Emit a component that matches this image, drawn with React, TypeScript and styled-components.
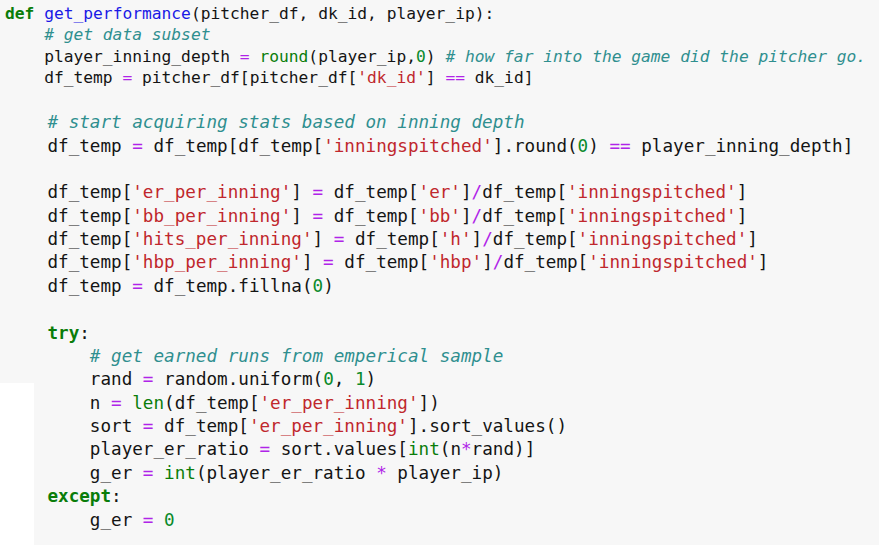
import React from "react";
import styled, { createGlobalStyle } from "styled-components";

const Global = createGlobalStyle`
  html, body { margin: 0; padding: 0; background: #f7f7f7; }
  #root { width: 879px; height: 545px; }
`;

const CodeCell = styled.div`
  width: 879px;
  height: 545px;
  box-sizing: border-box;
  padding: 2.6px 0 0 5px;
  overflow: hidden;
  display: flex;
  flex-direction: column;
  font-family: "DejaVu Sans Mono", "Liberation Mono", monospace;
  color: #141414;
  background:
    linear-gradient(#ffffff, #ffffff) 0 383px / 34px 162px no-repeat,
    #f7f7f7;
`;

const Section = styled.pre<{ $size: number; $lh: number; $gap?: number }>`
  margin: ${({ $gap }) => $gap ?? 0}px 0 0;
  font-family: inherit;
  font-size: ${({ $size }) => $size}px;
  line-height: ${({ $lh }) => $lh}px;
  white-space: pre;
`;

const Line = styled.div`
  min-height: 1lh;
`;

type Kind = "kw" | "fn" | "cm" | "op" | "str" | "num" | "bi" | "tx";

const Tok = styled.span<{ $k: Kind }>`
  color: ${({ $k }) =>
    ({
      kw: "#0a7d0a",
      fn: "#1a1ae6",
      cm: "#2f8f8f",
      op: "#b024e8",
      str: "#c0272d",
      num: "#0a8a2a",
      bi: "#0a7d0a",
      tx: "#141414",
    }[$k])};
  font-weight: ${({ $k }) => ($k === "kw" ? 700 : 400)};
  font-style: ${({ $k }) => ($k === "cm" ? "italic" : "normal")};
`;

const head = [
  "def get_performance(pitcher_df, dk_id, player_ip):",
  "    # get data subset",
  "    player_inning_depth = round(player_ip,0) # how far into the game did the pitcher go.",
  "    df_temp = pitcher_df[pitcher_df['dk_id'] == dk_id]",
  "",
];

const body = [
  "    # start acquiring stats based on inning depth",
  "    df_temp = df_temp[df_temp['inningspitched'].round(0) == player_inning_depth]",
  "",
  "    df_temp['er_per_inning'] = df_temp['er']/df_temp['inningspitched']",
  "    df_temp['bb_per_inning'] = df_temp['bb']/df_temp['inningspitched']",
  "    df_temp['hits_per_inning'] = df_temp['h']/df_temp['inningspitched']",
  "    df_temp['hbp_per_inning'] = df_temp['hbp']/df_temp['inningspitched']",
  "    df_temp = df_temp.fillna(0)",
  "",
  "    try:",
  "        # get earned runs from emperical sample",
  "        rand = random.uniform(0, 1)",
  "        n = len(df_temp['er_per_inning'])",
  "        sort = df_temp['er_per_inning'].sort_values()",
  "        player_er_ratio = sort.values[int(n*rand)]",
  "        g_er = int(player_er_ratio * player_ip)",
  "    except:",
  "        g_er = 0",
];

const KEYWORDS = new Set(["def", "try", "except"]);
const BUILTINS = new Set(["round", "len", "int"]);

function tokenize(line: string): { k: Kind; t: string }[] {
  const out: { k: Kind; t: string }[] = [];
  const re = /(#.*$)|('[^']*')|(\b\d+\b)|([A-Za-z_][A-Za-z0-9_]*)|(==|=|\/|\*)|(\s+)|(.)/g;
  let m: RegExpExecArray | null;
  let prevWord = "";
  while ((m = re.exec(line)) !== null) {
    if (m[1]) out.push({ k: "cm", t: m[1] });
    else if (m[2]) out.push({ k: "str", t: m[2] });
    else if (m[3]) out.push({ k: "num", t: m[3] });
    else if (m[4]) {
      const w = m[4];
      const isAttr = m.index > 0 && line[m.index - 1] === ".";
      if (KEYWORDS.has(w)) out.push({ k: "kw", t: w });
      else if (prevWord === "def") out.push({ k: "fn", t: w });
      else if (BUILTINS.has(w) && !isAttr) out.push({ k: "bi", t: w });
      else out.push({ k: "tx", t: w });
      prevWord = w;
      continue;
    } else if (m[5]) out.push({ k: "op", t: m[5] });
    else out.push({ k: "tx", t: m[0] });
    if (!m[6]) prevWord = "";
  }
  return out;
}

function CodeLines({ lines }: { lines: string[] }) {
  return (
    <>
      {lines.map((line, i) => (
        <Line key={i}>
          {line === ""
            ? " "
            : tokenize(line).map((tk, j) => (
                <Tok key={j} $k={tk.k}>
                  {tk.t}
                </Tok>
              ))}
        </Line>
      ))}
    </>
  );
}

export default function App() {
  return (
    <>
      <Global />
      <CodeCell>
        <Section $size={16.25} $lh={21.56}>
          <CodeLines lines={head} />
        </Section>
        <Section $size={17.62} $lh={23.38} $gap={0.8}>
          <CodeLines lines={body} />
        </Section>
      </CodeCell>
    </>
  );
}
